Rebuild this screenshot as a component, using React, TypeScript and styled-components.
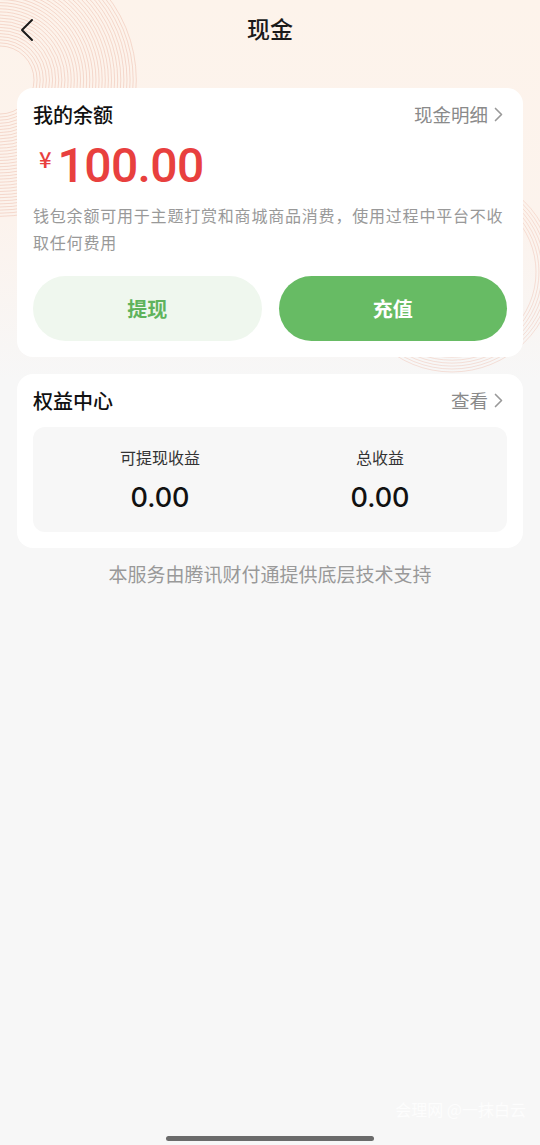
import styled, { createGlobalStyle } from 'styled-components';

const GlobalStyle = createGlobalStyle`
  html, body {
    margin: 0;
    padding: 0;
    background: #f7f7f7;
  }
  body {
    font-family: "Noto Sans CJK SC", "Noto Sans", sans-serif;
  }
`;

const Page = styled.div`
  position: relative;
  width: 540px;
  height: 1145px;
  overflow: hidden;
  background: linear-gradient(180deg, #fdf3eb 0px, #fcf3ed 220px, #f7f7f7 380px, #f7f7f7 100%);
`;

const Decor = styled.svg`
  position: absolute;
  left: 0;
  top: 0;
  pointer-events: none;
`;

const Content = styled.div`
  position: relative;
  display: flex;
  flex-direction: column;
`;

const NavBar = styled.header`
  height: 60px;
  display: flex;
  align-items: center;
  justify-content: center;
  position: relative;
`;

const BackButton = styled.button`
  position: absolute;
  left: 11px;
  top: 14px;
  width: 32px;
  height: 32px;
  border: none;
  background: none;
  padding: 0;
  display: flex;
  align-items: center;
  justify-content: center;
`;

const Title = styled.h1`
  margin: 0 0 4px;
  font-size: 23px;
  font-weight: 500;
  color: #1a1a1a;
`;

const Cards = styled.main`
  display: flex;
  flex-direction: column;
  gap: 17px;
  padding: 28px 17px 0;
`;

const Card = styled.section`
  background: #fff;
  border-radius: 16px;
  padding: 13px 16px 16px;
`;

const CardHead = styled.div`
  display: flex;
  align-items: center;
  justify-content: space-between;
  height: 26px;
`;

const CardTitle = styled.h2`
  margin: 0;
  font-size: 20px;
  font-weight: 500;
  color: #111;
`;

const Link = styled.span`
  display: flex;
  align-items: center;
  gap: 6px;
  font-size: 18.5px;
  color: #8a8a8a;
  margin-right: 4px;
`;

const Amount = styled.div`
  display: flex;
  align-items: baseline;
  color: #e8403e;
  margin-top: 10px;
  height: 56px;
`;

const Yen = styled.span`
  font-size: 22px;
  font-weight: 500;
  margin-left: 6px;
  margin-right: 6px;
  position: relative;
  top: -14px;
`;

const Digits = styled.span`
  font-family: Roboto, "Noto Sans", sans-serif;
  font-size: 48px;
  font-weight: 500;
  letter-spacing: -0.6px;
`;

const Note = styled.p`
  margin: 9px 0 0;
  font-size: 16px;
  letter-spacing: 0.8px;
  line-height: 27px;
  color: #999;
`;

const Actions = styled.div`
  display: grid;
  grid-template-columns: 1fr 1fr;
  gap: 17px;
  margin-top: 20px;
`;

const ActionButton = styled.button<{ $primary?: boolean }>`
  height: 65px;
  border: none;
  border-radius: 33px;
  font-family: inherit;
  font-size: 20px;
  font-weight: 700;
  background: ${(p) => (p.$primary ? '#67bb64' : '#eff7ee')};
  color: ${(p) => (p.$primary ? '#ffffff' : '#5fb35c')};
`;

const Stats = styled.div`
  display: grid;
  grid-template-columns: 1fr 1fr;
  margin-top: 14px;
  padding: 18px 17px 18px;
  background: #f7f7f7;
  border-radius: 12px;
`;

const Stat = styled.div`
  display: flex;
  flex-direction: column;
  align-items: center;
  gap: 12px;
`;

const StatLabel = styled.span`
  font-size: 16px;
  color: #333;
`;

const StatValue = styled.span`
  font-family: Inter, "Noto Sans", sans-serif;
  font-size: 27px;
  font-weight: 500;
  color: #111;
`;

const Footer = styled.p`
  margin: 12px 0 0;
  text-align: center;
  font-size: 19px;
  color: #999;
`;

const Watermark = styled.span`
  position: absolute;
  right: 14px;
  bottom: 24px;
  font-size: 16px;
  color: rgba(255, 255, 255, 0.75);
`;

const HomeBar = styled.div`
  position: absolute;
  left: 166px;
  bottom: 4px;
  width: 208px;
  height: 5px;
  border-radius: 3px;
  background: #6b6b6b;
`;

function Chevron({ size = 12, color = '#999', width = 1.1 }) {
  return (
    <svg width={size * 0.6} height={size} viewBox="0 0 6 10" fill="none">
      <path d="M1 1l4 4-4 4" stroke={color} strokeWidth={width} strokeLinecap="round" strokeLinejoin="round" />
    </svg>
  );
}

function Rings() {
  const tl = Array.from({ length: 34 }, (_, i) => 34 + i * 3.1);
  const br = Array.from({ length: 7 }, (_, i) => 84 + i * 3);
  return (
    <Decor width="540" height="400" viewBox="0 0 540 400">
      <g fill="none" stroke="#e9b09c" strokeOpacity="0.6" strokeWidth="0.7">
        {tl.map((r) => (
          <circle key={'a' + r} cx="0" cy="80" r={r} />
        ))}
      </g>
      <g fill="none" stroke="#eeb9a8" strokeOpacity="0.5" strokeWidth="0.8">
        {br.map((r) => (
          <ellipse key={'b' + r} cx="452" cy="272" rx={r} ry={r * 0.98} />
        ))}
      </g>
    </Decor>
  );
}

export default function App() {
  return (
    <Page>
      <GlobalStyle />
      <Rings />
      <Content>
        <NavBar>
          <BackButton>
            <svg width="16" height="24" viewBox="0 0 16 24" fill="none">
              <path d="M13 2L3 12l10 10" stroke="#1a1a1a" strokeWidth="2" strokeLinecap="round" strokeLinejoin="round" />
            </svg>
          </BackButton>
          <Title>现金</Title>
        </NavBar>
        <Cards>
          <Card>
            <CardHead>
              <CardTitle>我的余额</CardTitle>
              <Link>
                现金明细
                <Chevron size={15} />
              </Link>
            </CardHead>
            <Amount>
              <Yen>¥</Yen>
              <Digits>100.00</Digits>
            </Amount>
            <Note>钱包余额可用于主题打赏和商城商品消费，使用过程中平台不收取任何费用</Note>
            <Actions>
              <ActionButton>提现</ActionButton>
              <ActionButton $primary>充值</ActionButton>
            </Actions>
          </Card>
          <Card>
            <CardHead>
              <CardTitle>权益中心</CardTitle>
              <Link>
                查看
                <Chevron size={15} />
              </Link>
            </CardHead>
            <Stats>
              <Stat>
                <StatLabel>可提现收益</StatLabel>
                <StatValue>0.00</StatValue>
              </Stat>
              <Stat>
                <StatLabel>总收益</StatLabel>
                <StatValue>0.00</StatValue>
              </Stat>
            </Stats>
          </Card>
        </Cards>
        <Footer>本服务由腾讯财付通提供底层技术支持</Footer>
      </Content>
      <Watermark>会理网 @一抹白云</Watermark>
      <HomeBar />
    </Page>
  );
}
